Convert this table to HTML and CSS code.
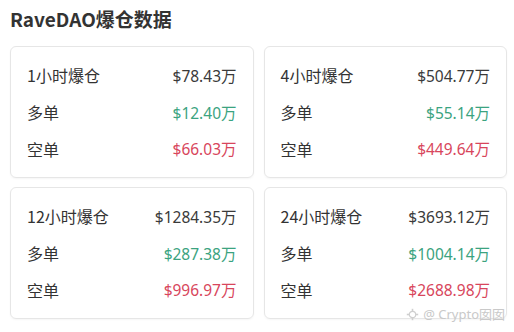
FILE: index.html
```html
<!DOCTYPE html>
<html>
<head>
<meta charset="utf-8">
<link rel="stylesheet" href="styles.css">
</head>
<body>
<div class="page">
  <h1 class="title">RaveDAO爆仓数据</h1>
  <div class="grid">
    <div class="card">
      <div class="row"><span class="label">1小时爆仓</span><span class="val">$78.43万</span></div>
      <div class="row"><span class="label">多单</span><span class="val up">$12.40万</span></div>
      <div class="row"><span class="label">空单</span><span class="val down">$66.03万</span></div>
    </div>
    <div class="card">
      <div class="row"><span class="label">4小时爆仓</span><span class="val">$504.77万</span></div>
      <div class="row"><span class="label">多单</span><span class="val up">$55.14万</span></div>
      <div class="row"><span class="label">空单</span><span class="val down">$449.64万</span></div>
    </div>
    <div class="card">
      <div class="row"><span class="label">12小时爆仓</span><span class="val">$1284.35万</span></div>
      <div class="row"><span class="label">多单</span><span class="val up">$287.38万</span></div>
      <div class="row"><span class="label">空单</span><span class="val down">$996.97万</span></div>
    </div>
    <div class="card">
      <div class="row"><span class="label">24小时爆仓</span><span class="val">$3693.12万</span></div>
      <div class="row"><span class="label">多单</span><span class="val up">$1004.14万</span></div>
      <div class="row"><span class="label">空单</span><span class="val down">$2688.98万</span></div>
    </div>
  </div>
  <div class="watermark">
    <svg class="wm-icon" width="13" height="13" viewBox="0 0 13 13"><circle cx="6.5" cy="6.5" r="3.2" fill="none" stroke="#cfcfcf" stroke-width="1.2"/><g stroke="#cfcfcf" stroke-width="1.6"><line x1="6.5" y1="0.8" x2="6.5" y2="3"/><line x1="6.5" y1="10" x2="6.5" y2="12.2"/><line x1="0.8" y1="6.5" x2="3" y2="6.5"/><line x1="10" y1="6.5" x2="12.2" y2="6.5"/></g></svg>
    <span class="wm-text">@ Crypto囡囡</span>
  </div>
</div>
</body>
</html>
```

FILE: styles.css
```css
html, body {
  margin: 0;
  padding: 0;
  background: #ffffff;
  overflow: hidden;
}
.page {
  position: relative;
  height: 332px;
  overflow: hidden;
  padding: 8px 7px 0 10px;
  box-sizing: border-box;
  font-family: "Noto Sans CJK SC", "Noto Sans", sans-serif;
}
.title {
  margin: 0;
  font-size: 19px;
  line-height: 22px;
  font-weight: 700;
  color: #333333;
}
.grid {
  margin-top: 16px;
  display: grid;
  grid-template-columns: 1fr 1fr;
  column-gap: 10px;
  row-gap: 9px;
}
.card {
  height: 132px;
  box-sizing: border-box;
  border: 1px solid #e6e6e6;
  border-radius: 6px;
  padding: 10px 16px 10px 16px;
  display: flex;
  flex-direction: column;
  box-shadow: 0 1px 2px rgba(0,0,0,0.04);
}
.row {
  height: 37px;
  display: flex;
  align-items: center;
  justify-content: space-between;
}
.label {
  font-size: 16px;
  color: #333333;
}
.val {
  font-family: "Noto Sans", "Noto Sans CJK SC", sans-serif;
  font-size: 15.5px;
  color: #3a3a3a;
}
.val.up {
  color: #3ba380;
}
.val.down {
  color: #d8465c;
}
.watermark {
  position: absolute;
  right: 9px;
  bottom: 10px;
  display: flex;
  align-items: center;
  gap: 4px;
  white-space: nowrap;
  font-family: "Noto Sans", "Noto Sans CJK SC", sans-serif;
  font-size: 13px;
  line-height: 16px;
  color: #c9c9c9;
}
```
